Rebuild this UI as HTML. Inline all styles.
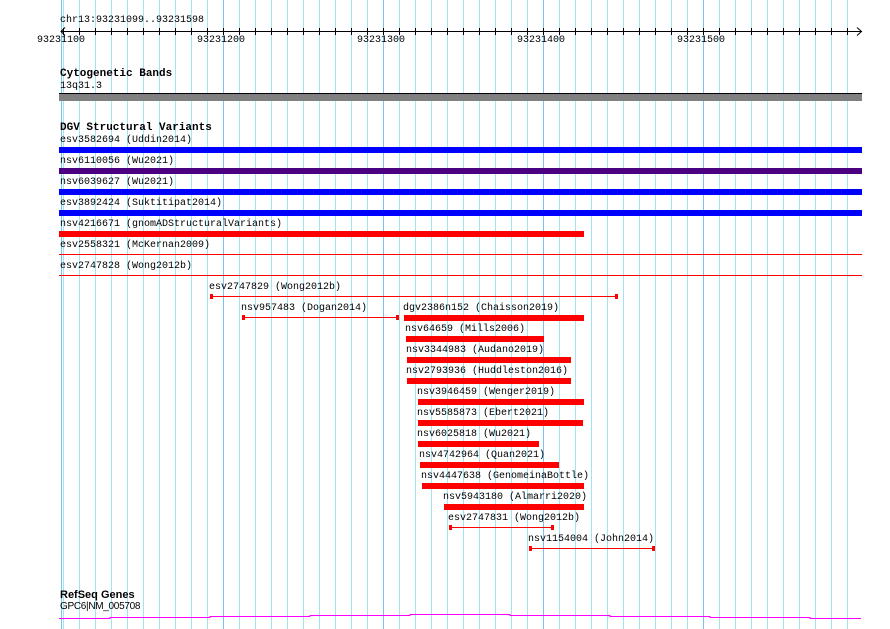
<!DOCTYPE html>
<html><head><meta charset="utf-8"><style>
body{margin:0;width:890px;height:629px;background:#fff;position:relative;overflow:hidden;font-family:"Liberation Mono",monospace;font-size:10px;color:#000}
.a{position:absolute}
.t{position:absolute;line-height:11px;white-space:pre;font-size:10px}
.h{position:absolute;font-weight:bold;font-size:11px;line-height:12px;white-space:pre}
.ln{position:absolute;height:1px;background:#f00}
.cap{position:absolute;width:3px;height:5px;background:#f00}
</style></head><body>
<svg class="a" style="left:0;top:0" width="890" height="629" shape-rendering="crispEdges">
<g stroke="#9fe6f0" stroke-width="1">
<line x1="79.5" y1="0" x2="79.5" y2="629"/><line x1="95.5" y1="0" x2="95.5" y2="629"/><line x1="111.5" y1="0" x2="111.5" y2="629"/><line x1="127.5" y1="0" x2="127.5" y2="629"/><line x1="143.5" y1="0" x2="143.5" y2="629"/><line x1="159.5" y1="0" x2="159.5" y2="629"/><line x1="175.5" y1="0" x2="175.5" y2="629"/><line x1="191.5" y1="0" x2="191.5" y2="629"/><line x1="207.5" y1="0" x2="207.5" y2="629"/>
<line x1="239.5" y1="0" x2="239.5" y2="629"/><line x1="255.5" y1="0" x2="255.5" y2="629"/><line x1="271.5" y1="0" x2="271.5" y2="629"/><line x1="287.5" y1="0" x2="287.5" y2="629"/><line x1="303.5" y1="0" x2="303.5" y2="629"/><line x1="319.5" y1="0" x2="319.5" y2="629"/><line x1="335.5" y1="0" x2="335.5" y2="629"/><line x1="351.5" y1="0" x2="351.5" y2="629"/><line x1="367.5" y1="0" x2="367.5" y2="629"/>
<line x1="399.5" y1="0" x2="399.5" y2="629"/><line x1="415.5" y1="0" x2="415.5" y2="629"/><line x1="431.5" y1="0" x2="431.5" y2="629"/><line x1="447.5" y1="0" x2="447.5" y2="629"/><line x1="463.5" y1="0" x2="463.5" y2="629"/><line x1="479.5" y1="0" x2="479.5" y2="629"/><line x1="495.5" y1="0" x2="495.5" y2="629"/><line x1="511.5" y1="0" x2="511.5" y2="629"/><line x1="527.5" y1="0" x2="527.5" y2="629"/>
<line x1="559.5" y1="0" x2="559.5" y2="629"/><line x1="575.5" y1="0" x2="575.5" y2="629"/><line x1="591.5" y1="0" x2="591.5" y2="629"/><line x1="607.5" y1="0" x2="607.5" y2="629"/><line x1="623.5" y1="0" x2="623.5" y2="629"/><line x1="639.5" y1="0" x2="639.5" y2="629"/><line x1="655.5" y1="0" x2="655.5" y2="629"/><line x1="671.5" y1="0" x2="671.5" y2="629"/><line x1="687.5" y1="0" x2="687.5" y2="629"/>
<line x1="719.5" y1="0" x2="719.5" y2="629"/><line x1="735.5" y1="0" x2="735.5" y2="629"/><line x1="751.5" y1="0" x2="751.5" y2="629"/><line x1="767.5" y1="0" x2="767.5" y2="629"/><line x1="783.5" y1="0" x2="783.5" y2="629"/><line x1="799.5" y1="0" x2="799.5" y2="629"/><line x1="815.5" y1="0" x2="815.5" y2="629"/><line x1="831.5" y1="0" x2="831.5" y2="629"/><line x1="847.5" y1="0" x2="847.5" y2="629"/>
<line x1="63.5" y1="0" x2="63.5" y2="629"/>
</g>
<g stroke="#78c4ec" stroke-width="1">
<line x1="61.5" y1="0" x2="61.5" y2="629"/><line x1="223.5" y1="0" x2="223.5" y2="629"/><line x1="383.5" y1="0" x2="383.5" y2="629"/><line x1="543.5" y1="0" x2="543.5" y2="629"/><line x1="703.5" y1="0" x2="703.5" y2="629"/>
</g>
<g stroke="#000" stroke-width="1">
<line x1="61" y1="31.5" x2="862" y2="31.5"/>
<path d="M63.5 28v7M79.5 28v7M95.5 28v7M111.5 28v7M127.5 28v7M143.5 28v7M159.5 28v7M175.5 28v7M191.5 28v7M207.5 28v7M223.5 28v7M239.5 28v7M255.5 28v7M271.5 28v7M287.5 28v7M303.5 28v7M319.5 28v7M335.5 28v7M351.5 28v7M367.5 28v7M383.5 28v7M399.5 28v7M415.5 28v7M431.5 28v7M447.5 28v7M463.5 28v7M479.5 28v7M495.5 28v7M511.5 28v7M527.5 28v7M543.5 28v7M559.5 28v7M575.5 28v7M591.5 28v7M607.5 28v7M623.5 28v7M639.5 28v7M655.5 28v7M671.5 28v7M687.5 28v7M703.5 28v7M719.5 28v7M735.5 28v7M751.5 28v7M767.5 28v7M783.5 28v7M799.5 28v7M815.5 28v7M831.5 28v7M847.5 28v7" fill="none"/>
<path d="M857 27.5l4.5 4-4.5 4M65 27.5l-4 4 4 4" fill="none" shape-rendering="auto"/>
</g>
<polyline fill="none" stroke="#f0f" stroke-width="1" points="59,618.5 110,618.5 110,617.5 210,617.5 210,616.5 310,616.5 310,615.5 410,615.5 410,614.5 510,614.5 510,615.5 610,615.5 610,616.5 710,616.5 710,617.5 810,617.5 810,618.5 861,618.5"/>
</svg>
<div class="t" style="left:60px;top:15px">chr13:93231099..93231598</div>
<div class="t" style="left:37px;top:35px">93231100</div>
<div class="t" style="left:197px;top:35px">93231200</div>
<div class="t" style="left:357px;top:35px">93231300</div>
<div class="t" style="left:517px;top:35px">93231400</div>
<div class="t" style="left:677px;top:35px">93231500</div>

<div class="h" style="left:60px;top:68px">Cytogenetic Bands</div>
<div class="t" style="left:60px;top:81px">13q31.3</div>
<div class="a" style="left:59px;top:93px;width:803px;height:1px;background:#000"></div>
<div class="a" style="left:59px;top:94px;width:803px;height:7px;background:#808080"></div>

<div class="h" style="left:60px;top:122px">DGV Structural Variants</div>
<div class="t" style="left:60px;top:135px">esv3582694 (Uddin2014)</div>
<div class="a" style="left:59px;top:147px;width:803px;height:6px;background:#00f"></div>
<div class="t" style="left:60px;top:156px">nsv6110056 (Wu2021)</div>
<div class="a" style="left:59px;top:168px;width:803px;height:6px;background:#4b0082"></div>
<div class="t" style="left:60px;top:177px">nsv6039627 (Wu2021)</div>
<div class="a" style="left:59px;top:189px;width:803px;height:6px;background:#00f"></div>
<div class="t" style="left:60px;top:198px">esv3892424 (Suktitipat2014)</div>
<div class="a" style="left:59px;top:210px;width:803px;height:6px;background:#00f"></div>
<div class="t" style="left:60px;top:219px">nsv4216671 (gnomADStructuralVariants)</div>
<div class="a" style="left:59px;top:231px;width:525px;height:6px;background:#f00"></div>
<div class="t" style="left:60px;top:240px">esv2558321 (McKernan2009)</div>
<div class="ln" style="left:59px;top:254px;width:803px"></div>
<div class="t" style="left:60px;top:261px">esv2747828 (Wong2012b)</div>
<div class="ln" style="left:59px;top:275px;width:803px"></div>

<div class="t" style="left:209px;top:282px">esv2747829 (Wong2012b)</div>
<div class="ln" style="left:210px;top:296px;width:407px"></div>
<div class="cap" style="left:210px;top:294px"></div><div class="cap" style="left:615px;top:294px"></div>
<div class="t" style="left:241px;top:303px">nsv957483 (Dogan2014)</div>
<div class="ln" style="left:242px;top:317px;width:156px"></div>
<div class="cap" style="left:242px;top:315px"></div><div class="cap" style="left:396px;top:315px"></div>
<div class="t" style="left:403px;top:303px">dgv2386n152 (Chaisson2019)</div>
<div class="a" style="left:404px;top:315px;width:180px;height:6px;background:#f00"></div>
<div class="t" style="left:405px;top:324px">nsv64659 (Mills2006)</div>
<div class="a" style="left:406px;top:336px;width:138px;height:6px;background:#f00"></div>
<div class="t" style="left:406px;top:345px">nsv3344983 (Audano2019)</div>
<div class="a" style="left:407px;top:357px;width:164px;height:6px;background:#f00"></div>
<div class="t" style="left:406px;top:366px">nsv2793936 (Huddleston2016)</div>
<div class="a" style="left:407px;top:378px;width:164px;height:6px;background:#f00"></div>
<div class="t" style="left:417px;top:387px">nsv3946459 (Wenger2019)</div>
<div class="a" style="left:418px;top:399px;width:166px;height:6px;background:#f00"></div>
<div class="t" style="left:417px;top:408px">nsv5585873 (Ebert2021)</div>
<div class="a" style="left:418px;top:420px;width:165px;height:6px;background:#f00"></div>
<div class="t" style="left:417px;top:429px">nsv6025818 (Wu2021)</div>
<div class="a" style="left:418px;top:441px;width:121px;height:6px;background:#f00"></div>
<div class="t" style="left:419px;top:450px">nsv4742964 (Quan2021)</div>
<div class="a" style="left:420px;top:462px;width:139px;height:6px;background:#f00"></div>
<div class="t" style="left:421px;top:471px">nsv4447638 (GenomeinaBottle)</div>
<div class="a" style="left:422px;top:483px;width:162px;height:6px;background:#f00"></div>
<div class="t" style="left:443px;top:492px">nsv5943180 (Almarri2020)</div>
<div class="a" style="left:444px;top:504px;width:140px;height:6px;background:#f00"></div>
<div class="t" style="left:448px;top:513px">esv2747831 (Wong2012b)</div>
<div class="ln" style="left:449px;top:527px;width:104px"></div>
<div class="cap" style="left:449px;top:525px"></div><div class="cap" style="left:551px;top:525px"></div>
<div class="t" style="left:528px;top:534px">nsv1154004 (John2014)</div>
<div class="ln" style="left:529px;top:548px;width:125px"></div>
<div class="cap" style="left:529px;top:546px"></div><div class="cap" style="left:652px;top:546px"></div>

<div class="h" style="left:60px;top:589px;font-family:'Liberation Sans',sans-serif">RefSeq Genes</div>
<div class="t" style="left:60px;top:601px;font-family:'Liberation Sans',sans-serif;letter-spacing:-0.3px">GPC6|NM_005708</div>
</body></html>
